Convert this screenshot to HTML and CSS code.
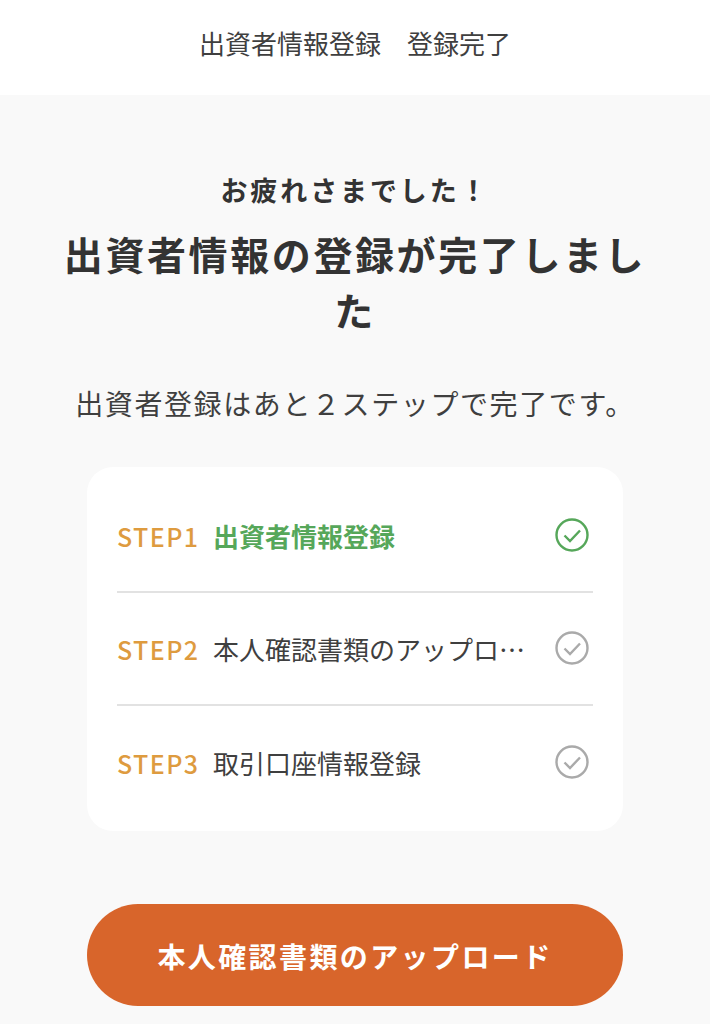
FILE: index.html
```html
<!DOCTYPE html>
<html lang="ja">
<head>
    <meta charset="UTF-8">
    <meta name="viewport" content="width=device-width, initial-scale=1.0">
    <title>登録完了</title>
    <link rel="stylesheet" href="styles.css">
</head>
<body>
    <header class="top-bar">出資者情報登録　登録完了</header>
    <main class="content">
        <p class="lead">お疲れさまでした！</p>
        <h1 class="title">出資者情報の登録が完了しました</h1>
        <p class="note">出資者登録はあと２ステップで完了です。</p>
        <ul class="steps">
            <li class="step done">
                <span class="step-no">STEP1</span>
                <span class="step-name">出資者情報登録</span>
                <svg class="check" viewBox="0 0 34 34"><circle cx="17" cy="17" r="15.5"/><path d="M9.5 17.5l5.5 5.5 10-10.5"/></svg>
            </li>
            <li class="step">
                <span class="step-no">STEP2</span>
                <span class="step-name">本人確認書類のアップロード</span>
                <svg class="check" viewBox="0 0 34 34"><circle cx="17" cy="17" r="15.5"/><path d="M9.5 17.5l5.5 5.5 10-10.5"/></svg>
            </li>
            <li class="step">
                <span class="step-no">STEP3</span>
                <span class="step-name">取引口座情報登録</span>
                <svg class="check" viewBox="0 0 34 34"><circle cx="17" cy="17" r="15.5"/><path d="M9.5 17.5l5.5 5.5 10-10.5"/></svg>
            </li>
        </ul>
        <button class="upload-btn">本人確認書類のアップロード</button>
    </main>
</body>
</html>
```

FILE: styles.css
```css
* {
    box-sizing: border-box;
}
html, body {
    height: 100%;
}
body {
    margin: 0;
    background-color: #f9f9f9;
    color: #333;
    font-family: "Noto Sans CJK JP", "Noto Sans", sans-serif;
    overflow: hidden;
}
.top-bar {
    display: flex;
    align-items: center;
    justify-content: center;
    height: 95px;
    padding-bottom: 9px;
    background-color: #fff;
    color: #3f3f3f;
    font-size: 26px;
    line-height: 1;
}
.content {
    display: flex;
    flex-direction: column;
    align-items: center;
    padding: 76px 60px 0;
}
.lead {
    margin: 0;
    font-size: 27px;
    line-height: 38px;
    font-weight: 700;
    letter-spacing: 2.9px;
}
.title {
    width: 590px;
    margin: 16px 0 0;
    font-size: 39px;
    line-height: 56px;
    font-weight: 700;
    letter-spacing: 2.6px;
    text-align: center;
}
.note {
    margin: 46px 0 0;
    color: #3f3f3f;
    font-size: 28px;
    line-height: 40px;
    letter-spacing: 1.6px;
    white-space: nowrap;
}
.steps {
    width: 536px;
    margin: 44px 0 0;
    padding: 13px 30px 12px;
    list-style: none;
    background-color: #fff;
    border-radius: 26px;
}
.step {
    display: flex;
    align-items: center;
    height: 113px;
    border-bottom: 2px solid #e2e2e2;
}
.step:last-child {
    border-bottom: none;
}
.step-no {
    flex: none;
    width: 97px;
    color: #de9b3f;
    font-size: 25px;
    font-weight: 500;
    letter-spacing: 1.4px;
}
.step-name {
    flex: 1;
    min-width: 0;
    color: #3f3f3f;
    font-size: 26px;
    margin-left: -1px;
    overflow: hidden;
    white-space: nowrap;
    text-overflow: ellipsis;
}
.done .step-name {
    color: #56a75a;
    font-weight: 700;
}
.check {
    flex: none;
    width: 34px;
    height: 34px;
    margin: 0 4px 2px 29px;
    fill: none;
    stroke: #aaa;
    stroke-width: 2.4;
}
.done .check {
    stroke: #56a75a;
}
.upload-btn {
    flex: none;
    width: 536px;
    height: 102px;
    margin-top: 73px;
    padding-top: 3px;
    border: none;
    border-radius: 51px;
    background-color: #d8652b;
    color: #fff;
    font-family: inherit;
    font-size: 28px;
    font-weight: 700;
    letter-spacing: 2.4px;
}
```
